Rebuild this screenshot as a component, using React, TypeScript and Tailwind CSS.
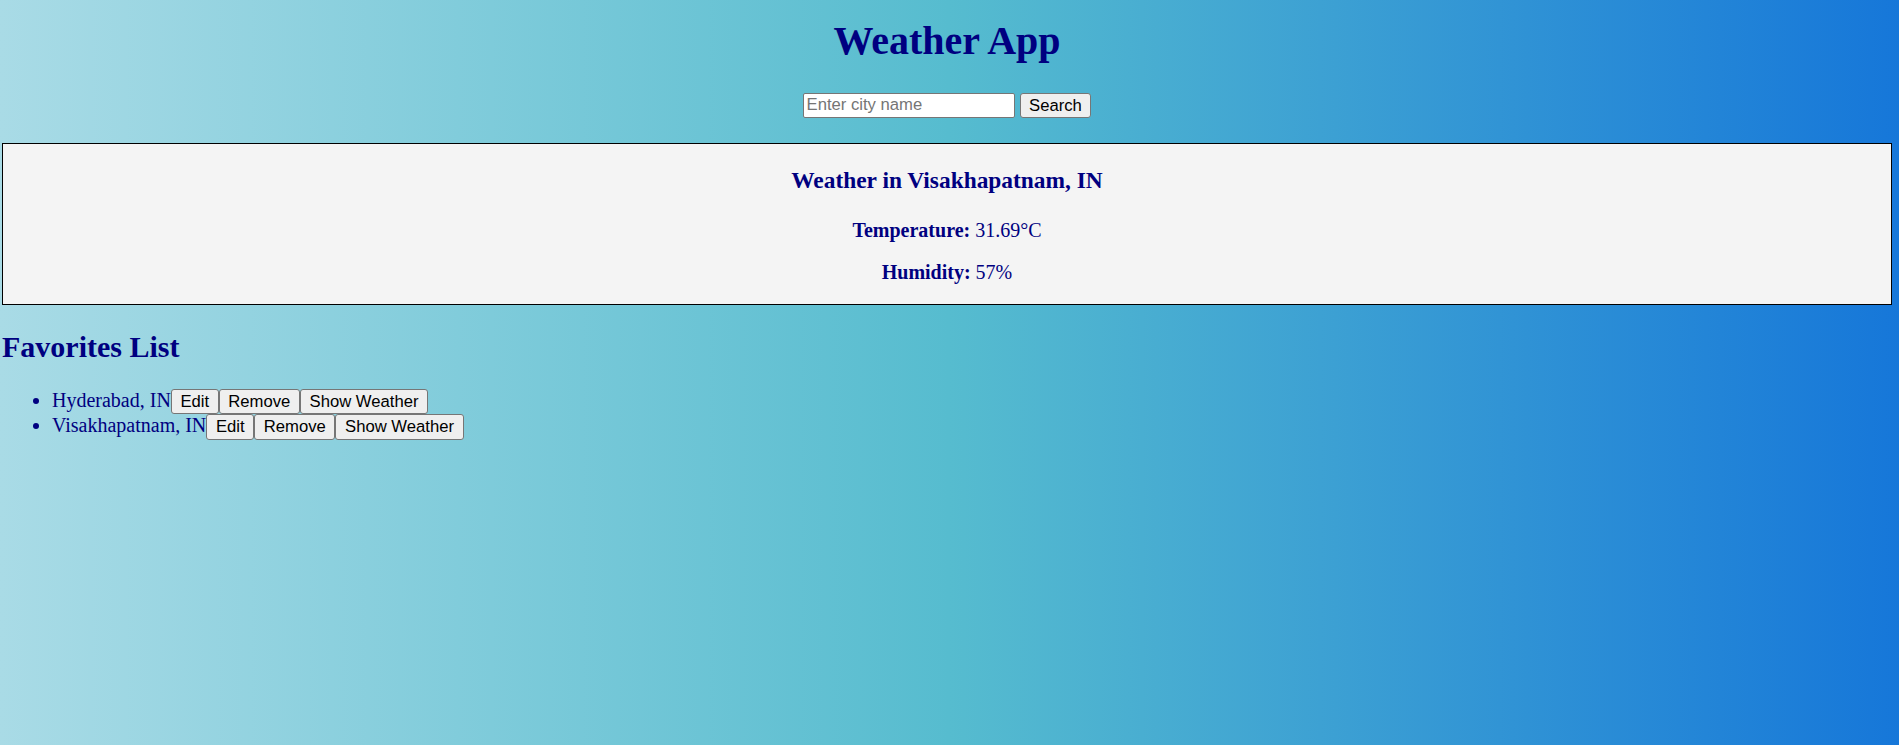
import React from "react";

const favorites = ["Hyderabad, IN", "Visakhapatnam, IN"];

function NativeButton({ children }: { children: React.ReactNode }) {
  return (
    <button className="inline-block align-baseline bg-[#efefef] border border-[#767676] rounded-[3px] px-[8.6px] py-[2px] text-[16.67px] leading-[19.5px] text-black font-['Liberation_Sans',Arial,sans-serif]">
      {children}
    </button>
  );
}

export default function App() {
  return (
    <div className="min-h-screen bg-[linear-gradient(to_right,#a9dbe6_0%,#56bccf_50%,#1677d9_100%)] pl-[2px] pr-[7px] pb-4 font-['Liberation_Serif','Times_New_Roman',serif] text-[20px] text-[#000080]">
      <h1 className="pt-[19px] text-center text-[40px] leading-[44px] font-bold">Weather App</h1>

      <div className="mt-[29.5px] flex items-center justify-center gap-[5px]">
        <input
          type="text"
          placeholder="Enter city name"
          className="w-[212px] h-[25px] bg-white border border-[#767676] rounded-[2px] px-[3px] text-[16.67px] text-black placeholder:text-[#757575] font-['Liberation_Sans',Arial,sans-serif]"
        />
        <NativeButton>Search</NativeButton>
      </div>

      <div className="mt-[25px] border border-black bg-[#f4f4f4] text-center pb-[1px]">
        <h3 className="mt-[22.5px] text-[23.4px] leading-[26px] font-bold">Weather in Visakhapatnam, IN</h3>
        <p className="mt-[26.25px] leading-[22px]">
          <strong>Temperature:</strong> 31.69°C
        </p>
        <p className="mt-[20.5px] leading-[22px]">
          <strong>Humidity:</strong> 57%
        </p>
        <div className="h-[20px]"></div>
      </div>

      <h2 className="mt-[25px] text-[30px] leading-[33px] font-bold">Favorites List</h2>
      <ul className="mt-[25.5px] list-disc pl-[50px]">
        {favorites.map((city) => (
          <li key={city} className="leading-[22px]">
            {city}
            <NativeButton>Edit</NativeButton>
            <NativeButton>Remove</NativeButton>
            <NativeButton>Show Weather</NativeButton>
          </li>
        ))}
      </ul>
    </div>
  );
}
